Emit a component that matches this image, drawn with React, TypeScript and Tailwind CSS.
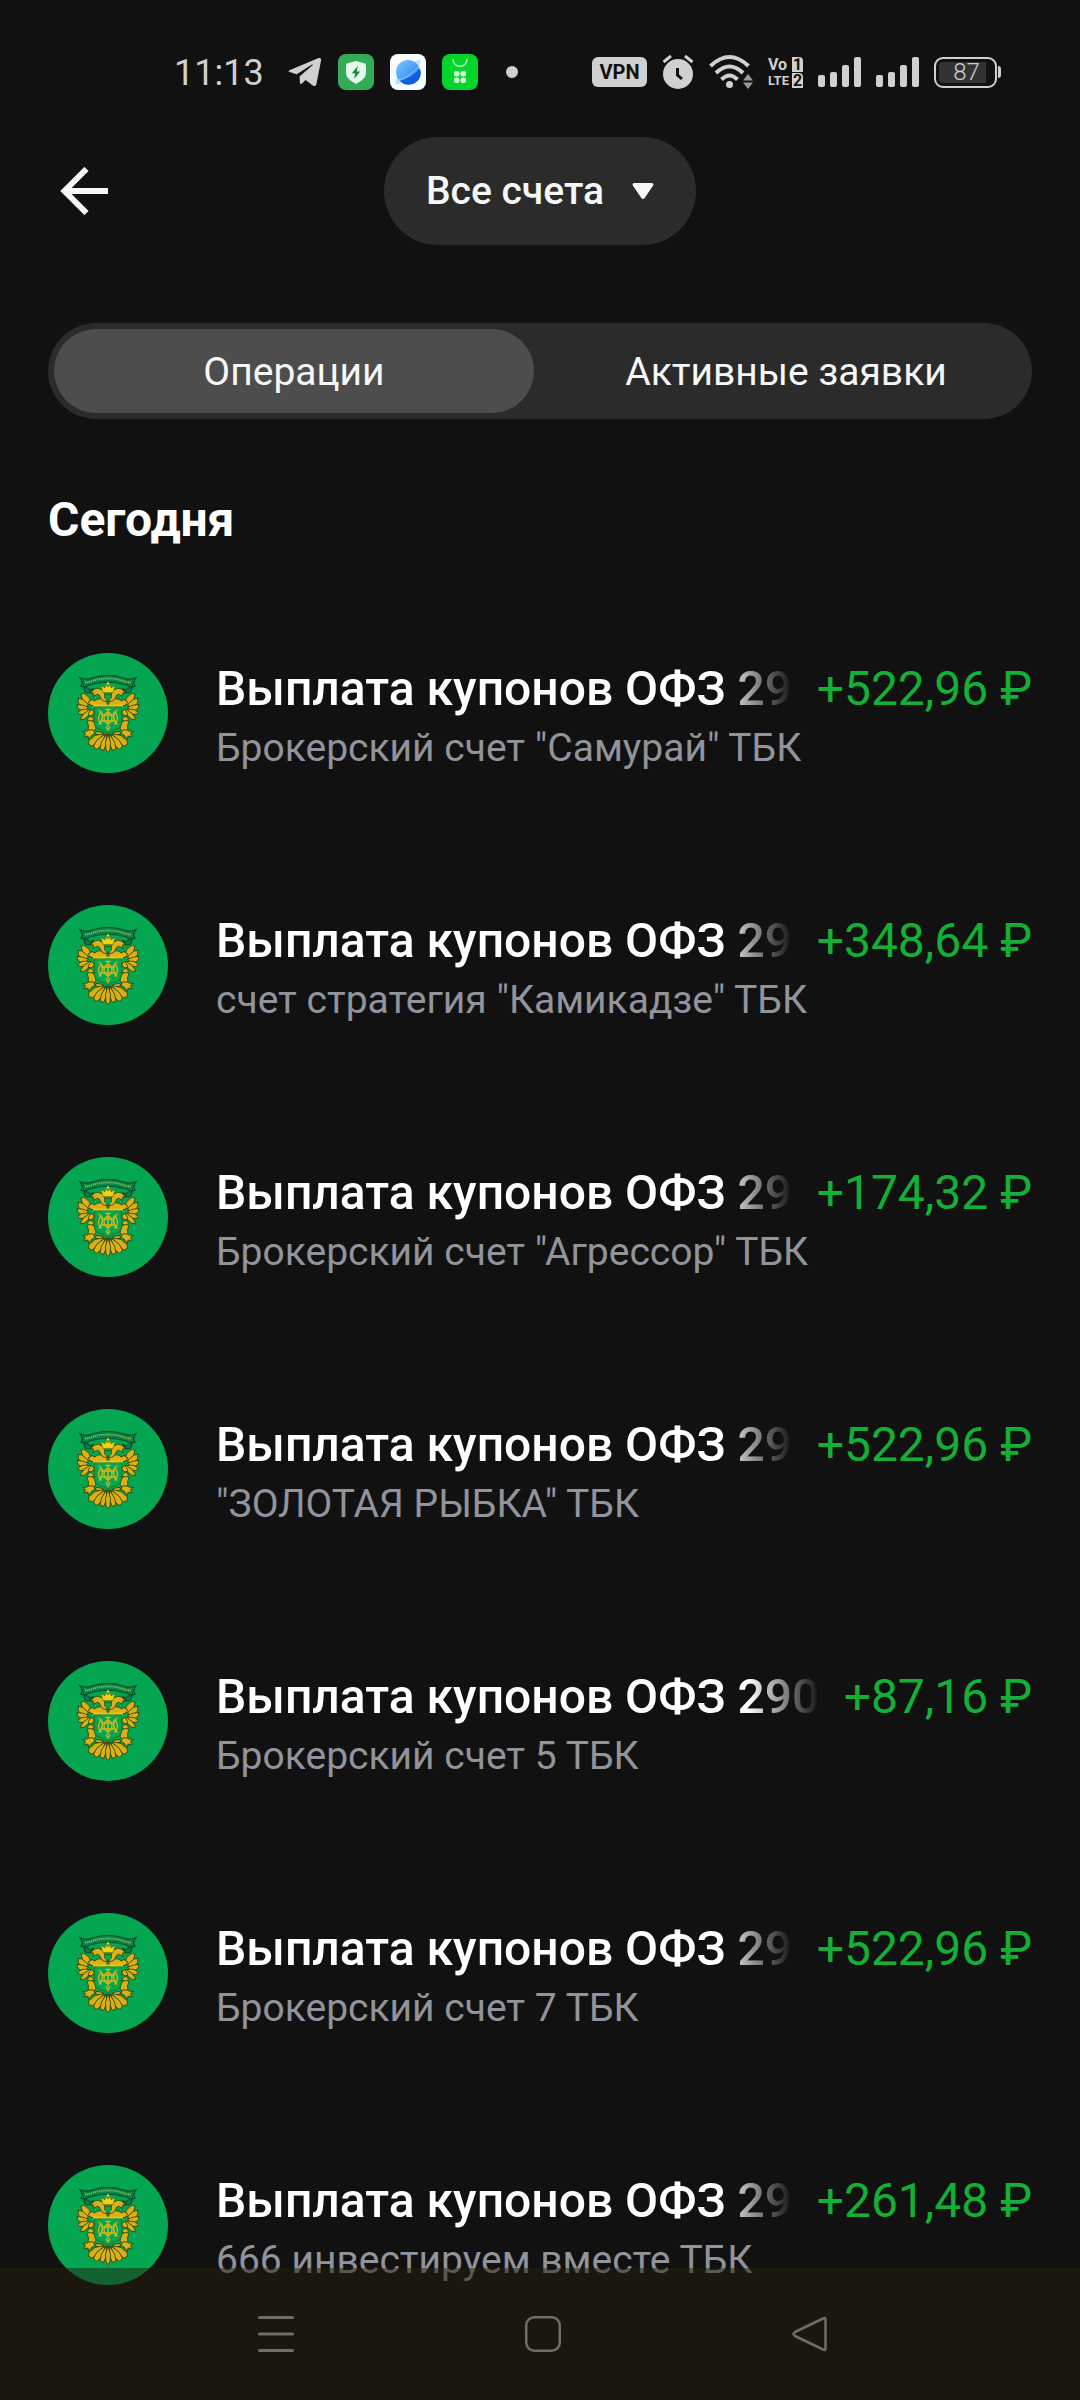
import { useState } from 'react';
import { clsx } from 'clsx';

interface Operation {
  title:   string;
  account: string;
  amount:  string;
}

const COUPON = 'Выплата купонов ОФЗ 290';

const OPERATIONS: Operation[] = [
  { title: COUPON, account: 'Брокерский счет "Самурай" ТБК',    amount: '+522,96' },
  { title: COUPON, account: 'счет стратегия "Камикадзе" ТБК',   amount: '+348,64' },
  { title: COUPON, account: 'Брокерский счет "Агрессор" ТБК',   amount: '+174,32' },
  { title: COUPON, account: '"ЗОЛОТАЯ РЫБКА" ТБК',              amount: '+522,96' },
  { title: COUPON, account: 'Брокерский счет 5 ТБК',            amount: '+87,16' },
  { title: COUPON, account: 'Брокерский счет 7 ТБК',            amount: '+522,96' },
  { title: COUPON, account: '666 инвестируем вместе ТБК',       amount: '+261,48' },
];

const TABS = ['Операции', 'Активные заявки'];

function SignalIcon() {
  return (
    <svg width="43" height="30" viewBox="0 0 43 30" fill="#d0d0d0">
      <rect x="0" y="18" width="7" height="12" rx="2" />
      <rect x="12" y="15" width="7" height="15" rx="2" />
      <rect x="24" y="8" width="7" height="22" rx="2" />
      <rect x="36" y="0" width="7" height="30" rx="2" />
    </svg>
  );
}

function StatusBar() {
  return (
    <div className="flex items-center justify-between pt-[54px] pb-[47px] pl-[174px] pr-[79px]">
      <div className="flex h-9 items-center gap-4">
        <span className="mr-2 pt-0.5 text-4xl text-[#d0d0d0]">11:13</span>

        <svg width="34" height="30" viewBox="0 0 34 30" fill="#d0d0d0">
          <path d="M1.5 13.3 30 1.2c2-.8 3.500.2 3 2.500l-4.600 23.300c-.3 2-2 2.700-3.600 1.600L17.600 23l-3.700 3.500c-.8.700-1.900.5-2-.8l-.3-6.200L24.500 8.200c.6-.6 0-1-.8-.5L8.600 17.200l-7-2.200c-1.500-.5-1.400-1.200-.1-1.700Z" />
        </svg>

        {/* Security app */}
        <svg width="36" height="36" viewBox="0 0 36 36">
          <rect width="36" height="36" rx="8" fill="#34ac57" />
          <path d="M18 7 27 9.500Q28 10 28 12v7c0 5-5 8-10 11-5-3-10-6-10-11v-7q0-2 1-2.500Z" fill="#e4fbe9" />
          <path d="m19.800 12-6 7.200h3.400l-1 5.800 6-7.400h-3.500Z" fill="#168a3c" />
        </svg>

        {/* Browser */}
        <svg width="36" height="36" viewBox="0 0 36 36">
          <defs>
            <linearGradient id="globe" x1="0" y1="0" x2="1" y2="1">
              <stop offset="0" stopColor="#7cc6ff" />
              <stop offset="1" stopColor="#1f7cf0" />
            </linearGradient>
          </defs>
          <rect width="36" height="36" rx="8" fill="#f8fbff" />
          <path d="M6 30c-2-4 3-10 9-15S29 4 30.500 6.500 27 15 21 21 8 32 6 30Z" fill="#bfe0fd" />
          <circle cx="18" cy="18" r="12" fill="url(#globe)" />
          <path d="M30 14.500A12 12 0 0 1 10 27c8-2 15-7 20-12.500Z" fill="#0d5fd8" />
          <path d="M7 26c9-1 17-8 22-14" fill="none" stroke="#8fd0ff" strokeWidth="1" />
        </svg>

        {/* App market */}
        <svg width="36" height="36" viewBox="0 0 36 36">
          <rect width="36" height="36" rx="8" fill="#04d52c" />
          <path d="M11 5.500c1 9 13 9 14 0" fill="none" stroke="#baf7bf" strokeWidth="1.500" strokeLinecap="round" />
          <g fill="#d3fbd4">
            <rect x="12" y="17" width="5.500" height="5.500" rx="2.200" />
            <rect x="18.500" y="17" width="5.500" height="5.500" rx="2.200" />
            <rect x="12" y="23.500" width="5.500" height="5.500" rx="2.200" />
            <rect x="18.500" y="23.500" width="5.500" height="5.500" rx="2.200" />
          </g>
        </svg>

        <span className="ml-3 size-3 rounded-full bg-[#d0d0d0]" />
      </div>

      <div className="flex h-9 items-center gap-[15px]">
        <span className="flex h-[30px] w-[55px] items-center justify-center rounded-md bg-[#d0d0d0] text-xl leading-none font-bold text-[#111]">
          VPN
        </span>

        {/* Alarm clock */}
        <svg width="32" height="36" viewBox="0 0 32 36">
          <circle cx="16" cy="20" r="15" fill="#d0d0d0" />
          <path d="m1.500 8 7.500-6M30.500 8 23 2" stroke="#d0d0d0" strokeWidth="3" />
          <path d="M15.500 14v7l4.500 4" fill="none" stroke="#111" strokeWidth="3" />
        </svg>

        {/* Wi-Fi with traffic arrows */}
        <svg width="44" height="36" viewBox="0 0 44 36">
          <g fill="none" stroke="#d0d0d0" strokeWidth="4">
            <path d="M1.500 12q19-18 38 0" />
            <path d="M7 19q13.500-13 27 0" />
            <path d="M12.500 25.500q8-8 16 0" />
          </g>
          <circle cx="20.500" cy="30.500" r="3.500" fill="#d0d0d0" />
          <path d="m39 20 5 6.500H34ZM39 35l5-6.500H34Z" fill="#9a9a9a" />
        </svg>

        {/* VoLTE on both SIM cards */}
        <div className="grid w-[35px] grid-cols-[23px_11px] gap-x-px gap-y-px text-base leading-[15px] font-bold text-[#d0d0d0]">
          <span>Vo</span>
          <span className="rounded-tr bg-[#d0d0d0] text-center text-[#111]">1</span>
          <span className="text-[13px]">LTE</span>
          <span className="rounded-tr bg-[#d0d0d0] text-center text-[#111]">2</span>
        </div>

        <SignalIcon />
        <SignalIcon />

        {/* Battery */}
        <div className="flex items-center gap-px">
          <div className="h-[31px] w-[63px] rounded-[9px] border-2 border-[#d0d0d0] p-[3px]">
            <div className="flex h-full w-[47px] items-center justify-center rounded-l bg-[#333] pl-2 text-2xl leading-none font-light text-[#d0d0d0]">
              87
            </div>
          </div>
          <span className="h-3 w-[3px] rounded-r bg-[#d0d0d0]" />
        </div>
      </div>
    </div>
  );
}

/** One side of the coat of arms, mirrored to get the other one */
function EagleHalf() {
  return (
    <g stroke="#33440f" strokeWidth=".9" strokeLinejoin="round" fill="#dcb116">
      {/* Wing feathers */}
      <path d="M43 51c0-5-3-9-7.500-10.500l-2.500.5 1.500 6 5 5Z" />
      <path d="m40 51-6-5-4-.5.5 4.500 5 5 4 1Z" />
      <path d="m40 54-6-2-5-.5 1 4 5 3 4-1.500Z" />
      <path d="m40 56-6 .5-4.500 3 2.500 2 5-.5 4-3Z" />
      <path d="m42 56-6 4.500-4 5.500 4 .5 5-4.500 3-4Z" />
      {/* Shoulder, neck and head */}
      <path d="M59 52.500H43l-3-3.500 4-2.500 3 1.500c2-2.500 6-3 8-1h4Z" />
      <path d="M59 48.500c-4 0-6-2-7-5-.5-2-2-2.500-3.500-2L45 43.500l.5-3.500-2.500 0c1-3 4.500-5 7.500-4.500 4 .5 5.500 4 6.500 7l2 2Z" />
      {/* Inner feathers running down the shield */}
      <path d="M43 56.500c2.500.5 3.500 2.500 2.500 5l-3.500 1.500-2-2Z" />
      <path d="M41 63.500c3 0 5 1.500 4.500 4l-3.500 1-2.500-2Z" />
      {/* Leg and claws */}
      <path d="M39 68.500c3-2 7-.5 8 2.500l1 5-3 2.500-5-2 .5-3.500Z" />
      <path d="M46 77.500c-3-1-5-1-7 .5l-4.500.5 3 2-1.500 3.500 4-1 .5 3.500 3.500-4.500 3-1.500Z" />
      <path d="m48 78.500 5 .5 3 1.500-4 1.500-4.500-1Z" />
      {/* Tail */}
      <path d="m56 80.500-9 2-6 5-.500 4 4 1.500 5-5Z" />
      <path d="m57 81-8 6-3.500 6 2.500 3.500 4-2.500 3.500-6Z" />
      <path d="m58.500 81-5 8-1.500 7 3.500 1.500 3-6.500Z" />
    </g>
  );
}

function CoatOfArms() {
  return (
    <svg className="size-[120px] shrink-0" viewBox="0 0 120 120">
      <circle cx="60" cy="60" r="60" fill="#04a652" />
      {/* Motto ribbon */}
      <path
        d="M32 24.500q6 3 12 .5 16-5.500 32 0 6 2.500 12-.5l-2.500 5 1.500 4q-5 .5-9-1.500-18-5.500-36 0-4 2-9 1.500l1.500-4Z"
        fill="#078347"
        stroke="#0a4f2c"
        strokeWidth="1.200"
      />
      <path d="M37 29.500q4 0 7-1.500 16-5 32 0 3 1.500 7 1.500" fill="none" stroke="#8dbb45" strokeWidth="1.800" strokeDasharray="1.200 .8" />
      <path
        d="M36 34.500q0 5 4 5.500 4 0 5-4.500l-3 1.500-2-2ZM84 34.500q0 5-4 5.500-4 0-5-4.500l3 1.500 2-2Z"
        fill="#078347"
        stroke="#0a4f2c"
        strokeWidth="1.200"
      />

      <EagleHalf />
      <g transform="translate(120 0) scale(-1 1)">
        <EagleHalf />
      </g>
      <path d="m60 80.500-2.500 9 .5 7.500 2 2.500 2-2.500.5-7.500Z" fill="#dcb116" stroke="#33440f" strokeWidth=".9" />

      {/* Crown */}
      <path d="m55 39.500-2-7 4 2.500 1-3.500 2 2.500 2-2.500 1 3.500 4-2.500-2 7Z" fill="#f5cf12" stroke="#6a6a10" strokeWidth=".5" />
      <circle cx="60" cy="30.500" r="1.300" fill="#f5cf12" />
      {/* Small shield between the heads */}
      <path d="M56.500 41.500h7v3.500l-3.500 3-3.500-3Z" fill="#04a652" stroke="#33440f" strokeWidth=".6" />
      {/* Shield */}
      <path d="M46.500 53h27v18c0 3-4 5.500-8.500 6.500l-5 3-5-3c-4.500-1-8.500-3.500-8.500-6.500Z" fill="#04a652" stroke="#2b6a1c" strokeWidth=".8" />
      <path d="M45 52.500h30" stroke="#f1c40f" strokeWidth="1.800" />
      {/* Monogram */}
      <g fill="none" stroke="#d9b818" strokeWidth="1.300">
        <path d="M60 56v18M57.500 56.500h5M58 73.500l2 3.500 2-3.500" />
        <ellipse cx="60" cy="65" rx="4" ry="5.500" />
        <path d="M50.500 57q4 1.500 4 6t-3.500 8.500M69.500 57q-4 1.500-4 6t3.500 8.500M53.500 71.500q-3-3-3-6.500t3-6.500M66.500 71.500q3-3 3-6.500t-3-6.500M53 62h14M53 68h14" />
      </g>
    </svg>
  );
}

function OperationRow({ title, account, amount }: Operation) {
  return (
    <li className="flex h-[252px] items-center gap-12">
      <CoatOfArms />
      <div className="min-w-0 flex-1 pt-2.5">
        <div className="flex items-baseline gap-6 text-5xl leading-[60px]">
          <span className="min-w-0 flex-1 overflow-hidden font-medium whitespace-nowrap text-white [mask-image:linear-gradient(to_right,black_calc(100%-72px),transparent)]">
            {title}
          </span>
          <span className="whitespace-nowrap text-[#12b035]">{amount}&nbsp;₽</span>
        </div>
        <p className="truncate text-[39px] leading-[58px] text-[#92949c]">{account}</p>
      </div>
    </li>
  );
}

function NavigationBar() {
  return (
    <nav className="fixed inset-x-0 bottom-0 flex h-[132px] items-center justify-center gap-[231px] bg-[#231d0e]/50 pl-1.5 text-[#706d66]">
      <button type="button" aria-label="Недавние">
        <svg width="36" height="36" viewBox="0 0 36 36" stroke="currentColor" strokeWidth="3" strokeLinecap="round">
          <path d="M1.500 1.500h33M1.500 18h33M1.500 34.500h33" />
        </svg>
      </button>
      <button type="button" aria-label="Домой">
        <svg width="36" height="36" viewBox="0 0 36 36" fill="none" stroke="currentColor" strokeWidth="2.500">
          <rect x="1.250" y="1.250" width="33.500" height="33.500" rx="8" />
        </svg>
      </button>
      <button type="button" aria-label="Назад">
        <svg width="36" height="36" viewBox="0 0 36 36" fill="none" stroke="currentColor" strokeWidth="2.500" strokeLinejoin="round">
          <path d="M33.500 3.500v29q0 2.500-2.500 1L3 20q-3-2 0-4L31 2.500q2.500-1.500 2.500 1Z" />
        </svg>
      </button>
    </nav>
  );
}

export default function App() {
  const [activeTab, setActiveTab] = useState(0);

  return (
    <div className="min-h-screen bg-[#111] font-['Roboto',sans-serif] text-[#f6f7f7]">
      <StatusBar />

      <main className="px-12">
        <header className="grid grid-cols-[1fr_auto_1fr] items-center">
          <button type="button" aria-label="Вернуться" className="ml-3 justify-self-start">
            <svg width="48" height="48" viewBox="0 0 48 48" fill="none" stroke="currentColor" strokeWidth="6">
              <path d="M26.500 2 4.500 24l22 22M3 24h45" />
            </svg>
          </button>
          <button
            type="button"
            className="flex h-[108px] items-center gap-7 rounded-full bg-[#2b2b2b] px-[42px] text-[39px] font-medium"
          >
            Все счета
            <svg width="22" height="18" viewBox="0 0 22 18" fill="currentColor">
              <path d="M3 1h16q3.500 0 2 2.800L13 15.500q-2 3-4 0L1 3.800Q-.5 1 3 1Z" />
            </svg>
          </button>
        </header>

        <div role="tablist" className="mt-[78px] grid h-24 grid-cols-2 gap-x-3 rounded-full bg-[#2b2b2b] p-1.5">
          {TABS.map((tab, i) => (
            <button
              key={tab}
              type="button"
              role="tab"
              aria-selected={i === activeTab}
              onClick={() => setActiveTab(i)}
              className={clsx('rounded-full pt-0.5 text-[39px]', i === activeTab && 'bg-[#4d4d4d]')}
            >
              {tab}
            </button>
          ))}
        </div>

        <h2 className="mt-[73px] text-5xl leading-[56px] font-bold text-white">Сегодня</h2>

        <ul className="mt-[39px]">
          {OPERATIONS.map((op, i) => (
            <OperationRow key={i} {...op} />
          ))}
        </ul>
      </main>

      <NavigationBar />
    </div>
  );
}
